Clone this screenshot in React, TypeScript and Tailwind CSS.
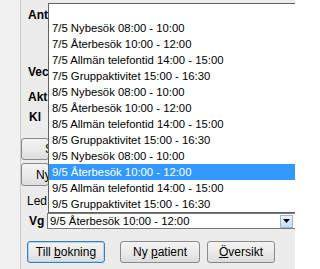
const rows = [
  "7/5 Nybesök 08:00 - 10:00",
  "7/5 Återbesök 10:00 - 12:00",
  "7/5 Allmän telefontid 14:00 - 15:00",
  "7/5 Gruppaktivitet 15:00 - 16:30",
  "8/5 Nybesök 08:00 - 10:00",
  "8/5 Återbesök 10:00 - 12:00",
  "8/5 Allmän telefontid 14:00 - 15:00",
  "8/5 Gruppaktivitet 15:00 - 16:30",
  "9/5 Nybesök 08:00 - 10:00",
  "9/5 Återbesök 10:00 - 12:00",
  "9/5 Allmän telefontid 14:00 - 15:00",
  "9/5 Gruppaktivitet 15:00 - 16:30",
];
const selected = 9;

const btn =
  "h-full flex items-center justify-center rounded-[3px] border bg-gradient-to-b from-[#f3f3f3] via-[#ebebeb] to-[#dcdcdc] text-[12px] whitespace-nowrap";

export default function App() {
  return (
    <div className="relative w-[295px] h-[269px] overflow-hidden bg-[#ececec] flex font-['Liberation_Sans',Arial,sans-serif] text-black">
      {/* left edge */}
      <div className="w-[21px] shrink-0 bg-[#f1f1f1] border-r border-[#cdcdcd]" />

      {/* form behind the popup */}
      <div className="flex-1 flex flex-col">
        <div className="h-[30px] pl-[7px] flex items-center font-bold text-[12px]">Ant</div>
        <div className="h-[32px]" />
        <div className="h-[20px] pl-[7px] flex items-center font-bold text-[12px]">Vec</div>
        <div className="h-[5px]" />
        <div className="h-[20px] pl-[7px] flex items-center font-bold text-[12px]">Akt</div>
        <div className="h-[20px] pl-[8px] flex items-center font-bold text-[12px]">Kl</div>
        <div className="h-[11px]" />
        <div className="h-[22px] flex">
          <div className={`${btn} w-[28px] overflow-hidden border-[#8a8a8a] !justify-start pl-[23px]`}>S</div>
        </div>
        <div className="h-[3px]" />
        <div className="h-[23px] flex">
          <div className={`${btn} w-[28px] overflow-hidden border-[#8a8a8a] !justify-start pl-[14px]`}>
            N<span className="underline">y</span>
          </div>
        </div>
        <div className="h-[7px]" />
        <div className="h-[16px] pl-[6px] flex items-center text-[12px]">Led</div>
        <div className="h-[4px]" />
        <div className="h-[16px] flex items-center">
          <div className="w-[26px] pl-[8px] font-bold text-[12px]">Vg</div>
          <div className="w-[250px] h-[16px] shrink-0 border border-[#7a7a7a] bg-white flex items-center text-[11.3px] pl-[2px]">
            <span className="flex-1">9/5 Återbesök 10:00 - 12:00</span>
            <div className="w-[13px] h-[13px] mr-[3px] border border-[#9bb7d6] bg-gradient-to-b from-[#eef5fc] to-[#c6dcf2] flex items-center justify-center">
              <svg width="7" height="4" viewBox="0 0 7 4">
                <path d="M0 0h7L3.5 4z" fill="#000" />
              </svg>
            </div>
          </div>
        </div>
        <div className="h-[12px]" />
        <div className="h-[22px] flex pl-[6px]">
          <div className={`${btn} w-[78px] border-[#3c7fb1] shadow-[inset_0_0_0_1px_#a8d8f4] from-[#eaf6fd] to-[#d9eefa]`}>
            Till&nbsp;<span className="underline">b</span>okning
          </div>
          <div className={`${btn} w-[80px] ml-[15px] border-[#8a8a8a]`}>
            Ny&nbsp;<span className="underline">p</span>atient
          </div>
          <div className={`${btn} w-[68px] ml-[7px] border-[#8a8a8a]`}>
            <span className="underline">Ö</span>versikt
          </div>
        </div>
      </div>

      {/* open dropdown list */}
      <div className="absolute left-[48px] top-[3px] w-[250px] h-[210px] border border-[#646464] bg-white pt-[16px] text-[11.3px]">
        {rows.map((r, i) => (
          <div
            key={i}
            className={`h-[16px] pl-[3px] flex items-center whitespace-nowrap ${
              i === selected ? "bg-[#3399ff] text-white" : ""
            }`}
          >
            {r}
          </div>
        ))}
      </div>
    </div>
  );
}
